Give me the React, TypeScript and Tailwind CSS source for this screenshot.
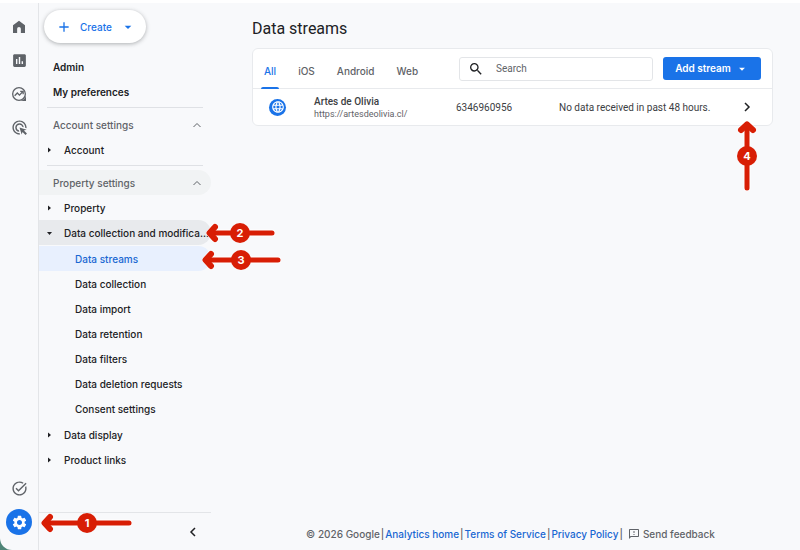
import { useState } from 'react';
import type { ReactNode } from 'react';
import {
  MdAdd,
  MdAdsClick,
  MdArrowDropDown,
  MdInsertChart,
  MdLanguage,
  MdOutlineFeedback,
  MdSearch,
  MdSettings,
  MdTaskAlt,
} from 'react-icons/md';
import clsx from 'clsx';

const TABS = ['All', 'iOS', 'Android', 'Web'];

const COLLECTION_ITEMS = [
  'Data streams',
  'Data collection',
  'Data import',
  'Data retention',
  'Data filters',
  'Data deletion requests',
  'Consent settings',
];

const STREAMS = [
  {
    name: 'Artes de Olivia',
    url: 'https://artesdeolivia.cl/',
    id: '6346960956',
    status: 'No data received in past 48 hours.',
  },
];

function HomeIcon() {
  return (
    <svg viewBox="0 0 24 24" className="size-4" fill="currentColor">
      <path d="M3 21V9.2L12 2.5l9 6.7V21h-6.2v-6.2a2.8 2.8 0 0 0-5.6 0V21z" />
    </svg>
  );
}

function ExploreIcon() {
  return (
    <svg viewBox="0 0 24 24" className="size-4" fill="none" stroke="currentColor" strokeWidth="2">
      <circle cx="12" cy="12" r="9.5" />
      <path d="M5.500 14.500 9.500 10.500l3.200 3.200 4.800-5" />
      <path d="M13.800 8h4.400v4.400" />
      <path d="M22.500 14v8.500H14c4.500-.8 7.500-3.800 8.500-8.500z" fill="currentColor" stroke="none" />
    </svg>
  );
}

interface ChevronProps {
  d: string;
  className: string;
}

function Chevron({ d, className }: ChevronProps) {
  return (
    <svg viewBox="0 0 12 12" className={className} fill="none" stroke="currentColor">
      <path d={d} />
    </svg>
  );
}

function Caret({ open }: { open?: boolean }) {
  return (
    <svg viewBox="0 0 6 6" className="size-[6px] shrink-0" fill="currentColor">
      <path d={open ? 'M0 2h5L2.500 5z' : 'M1 .5v5L4 3z'} />
    </svg>
  );
}

interface MarkerProps {
  label: string;
  length: number;
  badgeAt: number;
  vertical?: boolean;
  className: string;
}

// Red numbered arrow that lies over the page
function Marker({ label, length, badgeAt, vertical, className }: MarkerProps) {
  const shaft = vertical ? `M10 4V${length - 3}` : `M4 10H${length - 3}`;
  const head = vertical ? 'M4 9 10 3.500 16 9' : 'M9 4 3.500 10 9 16';
  const width = vertical ? 20 : length;
  const height = vertical ? length : 20;

  return (
    <span className={clsx('pointer-events-none absolute z-10', className)}>
      <svg width={width} height={height} fill="none" strokeLinecap="round" strokeLinejoin="round">
        <path d={shaft + head} stroke="#fff" strokeWidth="7" />
        <path d={shaft} stroke="#d81e05" strokeWidth="5" />
        <path d={head} stroke="#d81e05" strokeWidth="6" />
        <circle cx={vertical ? 10 : badgeAt} cy={vertical ? badgeAt : 10} r="10" fill="#d81e05" />
        <text
          x={vertical ? 10 : badgeAt}
          y={(vertical ? badgeAt : 10) + 4}
          textAnchor="middle"
          fill="#fff"
          className="font-[Inter,sans-serif] text-[11px] font-bold"
        >
          {label}
        </text>
      </svg>
    </span>
  );
}

interface TreeRowProps {
  label: string;
  open?: boolean;
  children?: ReactNode;
}

function TreeRow({ label, open, children }: TreeRowProps) {
  return (
    <li className="relative">
      <button
        aria-expanded={!!open}
        className={clsx(
          'flex h-[25px] w-full items-center gap-[11px] rounded-r-full pl-2 text-left whitespace-nowrap',
          open && 'bg-[#e8eaed]'
        )}
      >
        <Caret open={open} />
        {label}
      </button>
      {children}
    </li>
  );
}

function SectionHeader({ label, active }: { label: string; active?: boolean }) {
  return (
    <button
      aria-expanded="true"
      className={clsx(
        'flex h-[25px] w-full items-center justify-between rounded-r-full pr-2 pl-[14px] text-[#5f6368]',
        active && 'bg-[#f1f3f4]'
      )}
    >
      {label}
      <Chevron d="M2.500 8 6 4.500 9.500 8" className="size-3" />
    </button>
  );
}

function Rail() {
  return (
    <nav aria-label="Main" className="flex w-[39px] shrink-0 flex-col items-center border-r border-[#e3e5e8] text-[#5f6368]">
      <div className="flex flex-col items-center gap-[17px] pt-4">
        <button aria-label="Home"><HomeIcon /></button>
        <button aria-label="Reports"><MdInsertChart className="size-[17px]" /></button>
        <button aria-label="Explore"><ExploreIcon /></button>
        <button aria-label="Advertising"><MdAdsClick className="size-[17px]" /></button>
      </div>
      <div className="relative mt-auto flex flex-col items-center gap-3 pb-[15px]">
        <button aria-label="Setup"><MdTaskAlt className="size-[17px]" /></button>
        <button
          aria-label="Admin"
          className="flex size-[26px] items-center justify-center rounded-full bg-[#1a73e8] text-white"
        >
          <MdSettings className="size-[17px]" />
        </button>
        <Marker label="1" length={91} badgeAt={46} className="bottom-[17px] left-[35px]" />
      </div>
    </nav>
  );
}

function SideMenu() {
  const [selected, setSelected] = useState('Data streams');

  return (
    <aside className="flex w-[172px] shrink-0 flex-col text-[10px] leading-4 font-medium text-[#202124]">
      <button className="mt-[7px] ml-[5px] flex h-[33px] w-[102px] items-center rounded-full bg-white pl-3 text-[#1a73e8] shadow-[0_1px_4px_rgba(60,64,67,0.4)]">
        <MdAdd className="size-4" />
        <span className="ml-2">Create</span>
        <MdArrowDropDown className="ml-2 size-4" />
      </button>

      <div className="mt-[11px] flex flex-col font-semibold">
        <a href="#admin" className="flex h-[25px] items-center pl-[14px]">Admin</a>
        <a href="#preferences" className="flex h-[25px] items-center pl-[14px]">My preferences</a>
      </div>

      <hr className="mt-[3px] mr-2 mb-1 ml-2 border-[#dfe1e5]" />
      <SectionHeader label="Account settings" />
      <ul>
        <TreeRow label="Account" />
      </ul>

      <hr className="mt-[3px] mr-2 mb-1 ml-2 border-[#dfe1e5]" />
      <SectionHeader label="Property settings" active />
      <ul>
        <TreeRow label="Property" />
        <TreeRow label="Data collection and modifica..." open>
          <Marker label="2" length={69} badgeAt={34} className="top-[3px] left-[167px]" />
          <ul className="relative py-px">
            {COLLECTION_ITEMS.map((item) => (
              <li key={item}>
                <button
                  onClick={() => setSelected(item)}
                  className={clsx(
                    'flex h-[25px] w-full items-center rounded-r-full pl-9',
                    item === selected && 'bg-[#e8f0fe] text-[#1967d2]'
                  )}
                >
                  {item}
                </button>
              </li>
            ))}
            <Marker label="3" length={79} badgeAt={39} className="top-[5px] left-[163px]" />
          </ul>
        </TreeRow>
        <TreeRow label="Data display" />
        <TreeRow label="Product links" />
      </ul>

      <div className="mt-auto flex h-[38px] items-center justify-end border-t border-[#e3e5e8] pr-3">
        <button aria-label="Collapse menu">
          <Chevron d="M8 2 4 6l4 4" className="size-3 stroke-[1.500]" />
        </button>
      </div>
    </aside>
  );
}

function StreamCard() {
  const [tab, setTab] = useState('All');

  return (
    <section className="rounded-md border border-[#e8eaed] bg-white">
      <div className="flex h-10 items-center border-b border-[#e8eaed] pr-[11px]">
        <div role="tablist" className="flex h-full gap-4 pl-2 text-[10px] font-medium text-[#5f6368]">
          {TABS.map((name) => (
            <button
              key={name}
              role="tab"
              aria-selected={name === tab}
              onClick={() => setTab(name)}
              className={clsx(
                'relative h-full px-[3px] pt-[6px]',
                name === tab && 'text-[#1a73e8]'
              )}
            >
              {name}
              {name === tab && (
                <span className="absolute inset-x-0 -bottom-px h-[2px] rounded-t bg-[#1a73e8]" />
              )}
            </button>
          ))}
        </div>
        <label className="ml-auto flex h-6 w-[194px] items-center gap-3 rounded-[3px] border border-[#e3e5e8] pl-2">
          <MdSearch className="size-4 shrink-0 text-[#202124]" />
          <input
            type="text"
            aria-label="Search"
            placeholder="Search"
            className="w-full min-w-0 bg-transparent font-[Roboto,sans-serif] text-[10px] text-[#3c4043] placeholder-[#5f6368] outline-none"
          />
        </label>
        <button className="ml-[10px] flex h-[23px] w-[98px] items-center justify-center gap-1 rounded-[3px] bg-[#1a73e8] text-[10px] font-semibold whitespace-nowrap text-white">
          Add stream
          <MdArrowDropDown className="size-[14px]" />
        </button>
      </div>

      <table className="w-full table-fixed font-[Roboto,sans-serif] text-[10px] text-[#3c4043]">
        <tbody>
          {STREAMS.map((stream) => (
            <tr key={stream.id} className="h-9">
              <td className="w-[61px] pl-4">
                <span className="flex size-[17px] items-center justify-center rounded-full bg-[#1a73e8] text-white">
                  <MdLanguage className="size-[14px]" />
                </span>
              </td>
              <td className="w-[142px] pt-[2px] leading-3">
                <div className="font-medium">{stream.name}</div>
                <div className="text-[9px] text-[#5f6368]">{stream.url}</div>
              </td>
              <td className="w-[103px]">{stream.id}</td>
              <td className="whitespace-nowrap">{stream.status}</td>
              <td className="w-[37px]">
                <span className="relative flex">
                  <button aria-label={`Open ${stream.name}`} className="ml-[6px] text-[#202124]">
                    <Chevron d="M4 2l4 4-4 4" className="size-3 stroke-[1.500]" />
                  </button>
                  <Marker label="4" length={70} badgeAt={35} vertical className="top-5 left-[2px]" />
                </span>
              </td>
            </tr>
          ))}
        </tbody>
      </table>
    </section>
  );
}

function Footer() {
  return (
    <footer className="mt-auto flex items-center justify-center gap-px pr-1 pb-2 text-[10px] leading-4 font-medium whitespace-nowrap text-[#5f6368]">
      <span>© 2026 Google</span>|
      <a href="#home" className="text-[#1967d2]">Analytics home</a>|
      <a href="#terms" className="text-[#1967d2]">Terms of Service</a>|
      <a href="#privacy" className="text-[#1967d2]">Privacy Policy</a>|
      <button className="ml-1 flex items-center gap-[3px]">
        <MdOutlineFeedback className="size-3" />
        Send feedback
      </button>
    </footer>
  );
}

export default function App() {
  return (
    <div className="min-h-screen bg-[#4f8577] font-[Inter,sans-serif]">
      <div className="flex min-h-screen overflow-hidden rounded-bl-xl border-t-[3px] border-white bg-[#f8f9fb]">
        <Rail />
        <SideMenu />
        <main className="flex min-w-0 flex-1 flex-col pr-[27px] pl-[41px]">
          <h1 className="mt-[14px] mb-[7px] font-[Roboto,sans-serif] text-[16px] leading-6 text-[#202124]">Data streams</h1>
          <StreamCard />
          <Footer />
        </main>
      </div>
    </div>
  );
}
